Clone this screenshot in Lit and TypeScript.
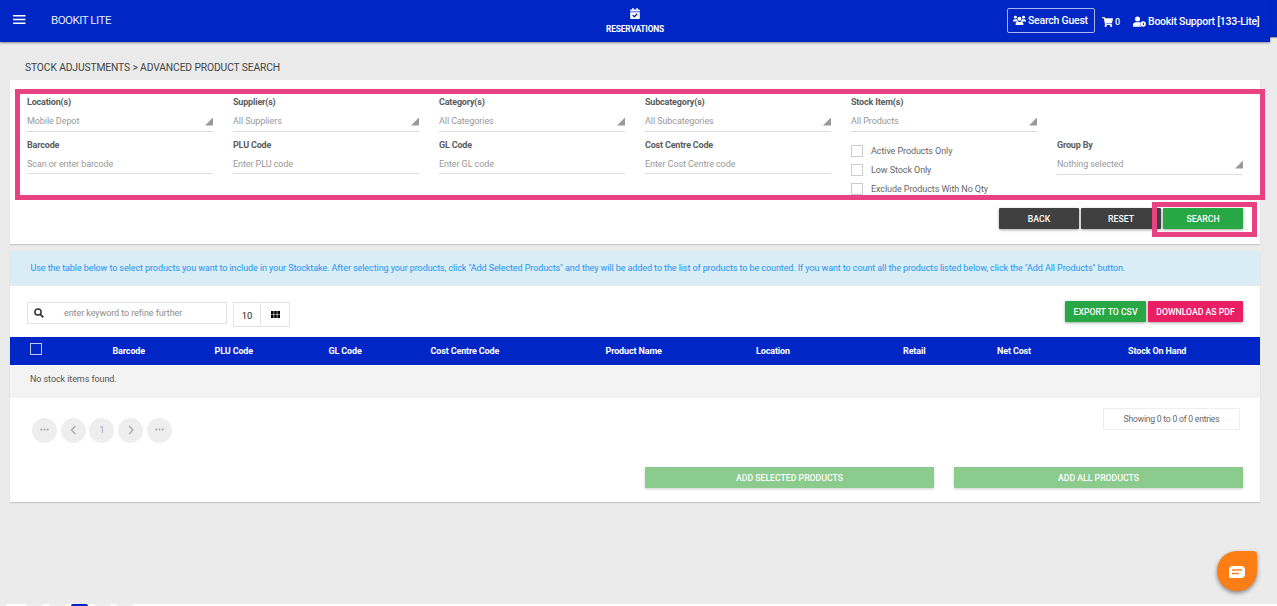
import { LitElement, html, css, svg } from "lit";
import { customElement } from "lit/decorators.js";

interface Field {
  label: string;
  value: string;
  select: boolean;
}

const TOP_FIELDS: Field[] = [
  { label: "Location(s)", value: "Mobile Depot", select: true },
  { label: "Supplier(s)", value: "All Suppliers", select: true },
  { label: "Category(s)", value: "All Categories", select: true },
  { label: "Subcategory(s)", value: "All Subcategories", select: true },
  { label: "Stock Item(s)", value: "All Products", select: true },
];

const CODE_FIELDS: Field[] = [
  { label: "Barcode", value: "Scan or enter barcode", select: false },
  { label: "PLU Code", value: "Enter PLU code", select: false },
  { label: "GL Code", value: "Enter GL code", select: false },
  { label: "Cost Centre Code", value: "Enter Cost Centre code", select: false },
];

const CHECKS = ["Active Products Only", "Low Stock Only", "Exclude Products With No Qty"];

const COLUMNS = [
  "Barcode", "PLU Code", "GL Code", "Cost Centre Code", "Product Name",
  "Location", "Retail", "Net Cost", "Stock On Hand",
];

const dots = svg`<circle cx="2.4" cy="5.6" r="1.1"/><circle cx="5.6" cy="5.6" r="1.1"/><circle cx="8.8" cy="5.6" r="1.1"/>`;
const chevronLeft = svg`<path d="M7.4 2 3.6 6l3.8 4" fill="none" stroke="currentColor" stroke-width="1.4"/>`;
const chevronRight = svg`<path d="M4.2 2 8 6l-3.8 4" fill="none" stroke="currentColor" stroke-width="1.4"/>`;

@customElement("app-root")
export class AppRoot extends LitElement {
  static styles = css`
    :host {
      display: block;
      position: relative;
      width: 1277px;
      height: 606px;
      overflow: hidden;
      background: #ebebeb;
      font-family: Roboto, "Liberation Sans", sans-serif;
      font-size: 9px;
      letter-spacing: -0.08px;
      color: #555;
    }
    * { box-sizing: border-box; }
    svg { display: block; flex: none; fill: currentColor; }

    .top { display: flex; align-items: flex-start; height: 42px; }
    .bar {
      display: grid;
      grid-template-columns: 51px 555px 401px 1fr;
      width: 1270px;
      height: 42px;
      background: #0026c5;
      color: #fff;
      box-shadow: 0 1px 2px rgba(0, 0, 0, 0.4);
    }
    .bar-end { width: 7px; height: 37px; background: #0026c5; box-shadow: 0 1px 1px rgba(0, 0, 0, 0.3); }
    .menu { padding: 15px 0 0 13px; }
    .brand { padding-top: 13px; line-height: 14px; font-size: 11.5px; letter-spacing: -0.48px; color: #e4e8fa; white-space: nowrap; }
    .nav { display: flex; flex-direction: column; align-items: center; width: 58px; padding-top: 8px; }
    .nav-text { margin-top: 5px; line-height: 10px; font-size: 8.4px; font-weight: 700; letter-spacing: -0.17px; white-space: nowrap; }
    .account { display: flex; font-size: 10.5px; font-weight: 500; letter-spacing: -0.24px; white-space: nowrap; }
    .guest {
      display: flex;
      align-items: center;
      gap: 2px;
      width: 88px;
      height: 25px;
      margin-top: 8px;
      padding-left: 5px;
      border: 1px solid #aab6ec;
      border-radius: 2px;
    }
    .cart { display: flex; align-items: center; gap: 2px; width: 30px; height: 12px; margin: 16px 0 0 7px; font-size: 9px; }
    .user { display: flex; align-items: center; gap: 2px; height: 14px; margin: 14px 0 0 1px; }

    .crumb { height: 38px; padding: 19px 0 0 25px; line-height: 14px; font-size: 10.3px; letter-spacing: -0.13px; color: #444; white-space: nowrap; }
    .panel { width: 1250px; margin-left: 10px; background: #fff; box-shadow: 0 1px 1px rgba(0, 0, 0, 0.15); }
    .filters { height: 164px; padding: 15px 17px 0; }
    .grid { display: grid; grid-template-columns: repeat(6, 186px); column-gap: 20px; white-space: nowrap; }
    .row-one { height: 43px; }
    .row-two { height: 70px; }
    .field { display: flex; flex-direction: column; height: 37px; padding-top: 1px; border-bottom: 1px solid #ddd; }
    .plain { height: 36px; }
    .label { line-height: 13px; font-size: 9px; font-weight: 700; letter-spacing: -0.18px; color: #5c5c5c; }
    .value { display: flex; justify-content: space-between; align-items: center; height: 13px; margin-top: 5px; color: #999; font-size: 9px; }
    .corner { width: 8px; height: 8px; margin-top: 2px; background: #999; clip-path: polygon(100% 0, 100% 100%, 0 100%); }
    .checks { display: flex; flex-direction: column; gap: 7.5px; padding-top: 7px; }
    .check { display: flex; align-items: center; gap: 8.5px; height: 11.5px; color: #666; }
    .box { flex: none; width: 11.5px; height: 11.5px; border: 1px solid #ccc; background: #fff; }

    .btn {
      display: flex;
      align-items: center;
      justify-content: center;
      height: 21px;
      border-radius: 1px;
      color: #fff;
      font-size: 8.7px;
      font-weight: 500;
      letter-spacing: 0;
      white-space: nowrap;
      box-shadow: 0 1px 3px rgba(0, 0, 0, 0.35);
    }
    .actions { display: flex; justify-content: flex-end; gap: 2px; }
    .dark { width: 80px; background: #404040; }
    .green { width: 80px; background: #28a745; }
    .export { width: 81px; }
    .pink { width: 95px; background: #e91e63; }

    .results { height: 251px; margin-top: 7px; }
    .info { height: 35px; padding: 10px 0 0 20.5px; line-height: 14px; letter-spacing: -0.086px; border-bottom: 1px solid #e6e9ea; background: #d9edf7; color: #2793f0; white-space: nowrap; }
    .tools { display: flex; align-items: flex-start; height: 51px; padding: 15px 17px 0; }
    .search { display: flex; align-items: center; gap: 20px; width: 200px; height: 22px; margin-top: 1px; padding-left: 6px; border: 1px solid #e3e3e3; color: #8c8c8c; white-space: nowrap; }
    .lens { color: #333; }
    .toggle { display: grid; grid-template-columns: 26px 1fr; width: 57px; height: 25px; margin: 1px auto 0 6px; border: 1px solid #e3e3e3; color: #222; }
    .cell { display: flex; align-items: center; justify-content: center; font-size: 9.5px; padding-top: 1px; }
    .cell + .cell { border-left: 1px solid #e3e3e3; padding-top: 0; color: #000; }
    .head {
      display: grid;
      grid-template-columns: 82.5px 102px 114px 102px 175px 150.5px 147px 94px 131px 1fr;
      align-items: center;
      height: 28px;
      padding-left: 20px;
      background: #0026c5;
      color: #fff;
      font-weight: 700;
      letter-spacing: -0.14px;
      white-space: nowrap;
    }
    .head .box { margin-bottom: 4px; border-color: #c2caf0; background: none; }
    .empty { height: 33px; padding: 6px 0 0 20px; line-height: 14px; border-top: 1px solid #fff; background: #f3f3f3; }
    .foot { display: flex; justify-content: space-between; height: 69px; padding: 10px 20px 0 22px; }
    .pages { display: flex; gap: 3.7px; padding-top: 9.5px; }
    .page { display: flex; align-items: center; justify-content: center; width: 25px; height: 25px; border-radius: 50%; background: #eee; color: #aaa; }
    .count { display: flex; align-items: center; justify-content: center; width: 137px; height: 22px; border: 1px solid #eee; font-size: 8.6px; letter-spacing: -0.22px; color: #666; }
    .adds { display: flex; justify-content: flex-end; gap: 20px; padding-right: 17px; }
    .add { width: 289px; background: #8bcb8e; box-shadow: 0 1px 3px rgba(0, 0, 0, 0.2); }

    .mark { position: absolute; border: 5px solid #e84282; }
    .mark-filters { left: 15px; top: 89px; width: 1250px; height: 111px; }
    .mark-search { left: 1152px; top: 202px; width: 105px; height: 35px; }

    .chat {
      position: absolute;
      left: 1217px;
      top: 551px;
      display: flex;
      align-items: center;
      justify-content: center;
      width: 40px;
      height: 40px;
      padding-top: 1px;
      border-radius: 50% 4px 50% 50%;
      background: #fd7e14;
      color: #fff;
      box-shadow: 0 2px 4px rgba(0, 0, 0, 0.45);
    }
    .below { position: absolute; left: 6px; right: 0; top: 604px; height: 2px; padding-left: 20px; display: flex; gap: 5.6px; background: #fff; }
    .stub { width: 17px; height: 2px; border-radius: 2px 2px 0 0; background: #eee; }
    .current { background: #0026c5; }
  `;

  private field(f: Field) {
    return html`<div class="field ${f.select ? "" : "plain"}">
      <div class="label">${f.label}</div>
      <div class="value"><span>${f.value}</span>${f.select ? html`<i class="corner"></i>` : ""}</div>
    </div>`;
  }

  private page(content: unknown) {
    return html`<div class="page"><svg width="11" height="12" viewBox="0 0 11.2 12">${content}</svg></div>`;
  }

  render() {
    return html`
      <header class="top">
        <div class="bar">
          <div class="menu">
            <svg width="13" height="9" viewBox="0 0 13 9"><path d="M0 0h12.5v1.6H0zM0 3.7h12.5v1.6H0zM0 7.4h12.5V9H0z"/></svg>
          </div>
          <div class="brand">BOOKIT LITE</div>
          <div class="nav">
            <svg width="10" height="11" viewBox="0 0 448 512"><path fill-rule="evenodd" d="M436 160H12c-7 0-12-5-12-12v-36c0-27 21-48 48-48h48V12c0-7 5-12 12-12h40c7 0 12 5 12 12v52h128V12c0-7 5-12 12-12h40c7 0 12 5 12 12v52h48c27 0 48 21 48 48v36c0 7-5 12-12 12zM12 192h424c7 0 12 5 12 12v260c0 27-21 48-48 48H48c-27 0-48-21-48-48V204c0-7 5-12 12-12zm333 96-28-29c-5-5-12-5-17 0L194 364l-46-46c-5-5-12-5-17 0l-28 28c-5 5-5 12 0 17l82 83c5 4 12 4 17 0l143-141c4-5 4-12 0-17z"/></svg>
            <div class="nav-text">RESERVATIONS</div>
          </div>
          <div class="account">
            <div class="guest">
              <svg width="13" height="11" viewBox="0 0 640 512"><circle cx="120" cy="90" r="72"/><circle cx="520" cy="90" r="72"/><circle cx="320" cy="170" r="96"/><path d="M0 280c0-55 35-90 80-90h80c20 0 35 6 48 18 5 45 25 72 50 92H0zM640 280c0-55-35-90-80-90h-80c-20 0-35 6-48 18-5 45-25 72-50 92h258zM130 480v-60c0-62 50-112 105-112 50 25 120 25 170 0 55 0 105 50 105 112v60z"/></svg>
              <span>Search Guest</span>
            </div>
            <div class="cart">
              <svg width="11" height="10" viewBox="0 0 576 512"><path d="M528 301l47-208c4-15-8-29-23-29H159l-9-45C148 8 138 0 126 0H24C11 0 0 11 0 24v16c0 13 11 24 24 24h70l70 343a56 56 0 1 0 67 9h210a56 56 0 1 0 64-10l5-25c4-15-8-29-23-29H218l-7-32h294c11 0 21-8 23-19z"/></svg>
              <span>0</span>
            </div>
            <div class="user">
              <svg width="13" height="11" viewBox="0 0 640 512"><circle cx="224" cy="128" r="124"/><path d="M0 512v-90c0-74 60-134 134-134h180c25 0 48 7 68 18-40 60-30 150 20 206z"/><path fill-rule="evenodd" d="M500 240a136 136 0 1 1 0 272 136 136 0 0 1 0-272zm-14 60v150l80-75z"/></svg>
              <span>Bookit Support [133-Lite]</span>
            </div>
          </div>
        </div>
        <div class="bar-end"></div>
      </header>

      <div class="crumb">STOCK ADJUSTMENTS &gt; ADVANCED PRODUCT SEARCH</div>

      <section class="panel filters">
        <div class="grid row-one">${TOP_FIELDS.map((f) => this.field(f))}</div>
        <div class="grid row-two">
          ${CODE_FIELDS.map((f) => this.field(f))}
          <div class="checks">${CHECKS.map((c) => html`<div class="check"><i class="box"></i><span>${c}</span></div>`)}</div>
          ${this.field({ label: "Group By", value: "Nothing selected", select: true })}
        </div>
        <div class="actions">
          <div class="btn dark">BACK</div>
          <div class="btn dark">RESET</div>
          <div class="btn green">SEARCH</div>
        </div>
      </section>

      <section class="panel results">
        <div class="info">Use the table below to select products you want to include in your Stocktake. After selecting your products, click "Add Selected Products" and they will be added to the list of products to be counted. If you want to count all the products listed below, click the "Add All Products" button.</div>
        <div class="tools">
          <div class="search">
            <svg class="lens" width="10" height="10" viewBox="0 0 10 10"><circle cx="4" cy="4" r="3.1" fill="none" stroke="currentColor" stroke-width="1.5"/><path d="m6.3 6.3 3 3" stroke="currentColor" stroke-width="1.8"/></svg>
            <span>enter keyword to refine further</span>
          </div>
          <div class="toggle">
            <div class="cell">10</div>
            <div class="cell"><svg width="9" height="7" viewBox="0 0 9 7"><path d="M0 0h2.6v3.2H0zM3.2 0h2.6v3.2H3.2zM6.4 0H9v3.2H6.4zM0 3.8h2.6V7H0zM3.2 3.8h2.6V7H3.2zM6.4 3.8H9V7H6.4z"/></svg></div>
          </div>
          <div class="actions">
            <div class="btn green export">EXPORT TO CSV</div>
            <div class="btn pink">DOWNLOAD AS PDF</div>
          </div>
        </div>
        <div class="head"><i class="box"></i>${COLUMNS.map((c) => html`<span>${c}</span>`)}</div>
        <div class="empty">No stock items found.</div>
        <div class="foot">
          <div class="pages">
            ${this.page(dots)}${this.page(chevronLeft)}
            <div class="page">1</div>
            ${this.page(chevronRight)}${this.page(dots)}
          </div>
          <div class="count">Showing 0 to 0 of 0 entries</div>
        </div>
        <div class="adds">
          <div class="btn add">ADD SELECTED PRODUCTS</div>
          <div class="btn add">ADD ALL PRODUCTS</div>
        </div>
      </section>

      <div class="mark mark-filters"></div>
      <div class="mark mark-search"></div>
      <div class="chat">
        <svg width="16" height="12" viewBox="0 0 16 12"><path fill-rule="evenodd" d="M4 0h8q4 0 4 4v4q0 4-4 4H1.500q-1.500 0-1.500-1.500V4Q0 0 4 0zM3 3.300v1.500h10V3.300zM3 6.700v1.500h7V6.700z"/></svg>
      </div>
      <div class="below">
        <i class="stub"></i><i class="stub"></i><i class="stub current"></i><i class="stub"></i><i class="stub"></i>
      </div>
    `;
  }
}
